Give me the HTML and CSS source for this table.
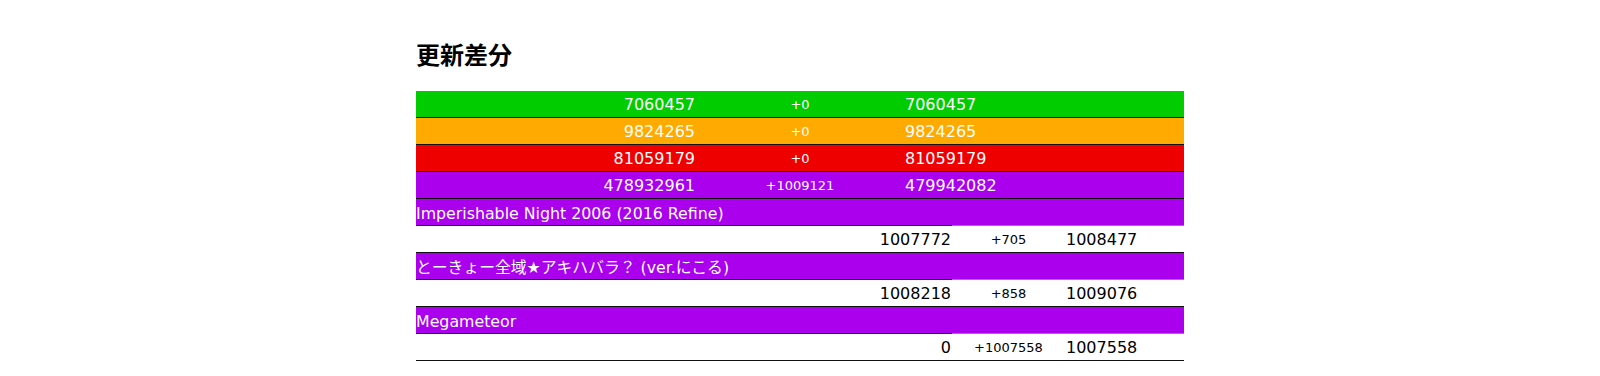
FILE: index.html
```html
<!DOCTYPE html>
<html lang="ja">
<head>
<meta charset="utf-8">
<title>更新差分</title>
<link rel="stylesheet" href="styles.css">
</head>
<body>
<main class="page">
  <h2 class="heading">更新差分</h2>
  <div class="diff">
    <div class="row summary basic"><span class="before">7060457</span><span class="delta">+0</span><span class="after">7060457</span></div>
    <div class="row summary advanced"><span class="before">9824265</span><span class="delta">+0</span><span class="after">9824265</span></div>
    <div class="row summary expert"><span class="before">81059179</span><span class="delta">+0</span><span class="after">81059179</span></div>
    <div class="row summary master"><span class="before">478932961</span><span class="delta">+1009121</span><span class="after">479942082</span></div>

    <div class="row song master"><span class="name">Imperishable Night 2006 (2016 Refine)</span></div>
    <div class="row score"><span class="before">1007772</span><span class="delta">+705</span><span class="after">1008477</span></div>

    <div class="row song master"><span class="name">とーきょー全域★アキハバラ？ (ver.にこる)</span></div>
    <div class="row score"><span class="before">1008218</span><span class="delta">+858</span><span class="after">1009076</span></div>

    <div class="row song master"><span class="name">Megameteor</span></div>
    <div class="row score"><span class="before">0</span><span class="delta">+1007558</span><span class="after">1007558</span></div>
  </div>
</main>
</body>
</html>
```

FILE: styles.css
```css
html, body {
  margin: 0;
  padding: 0;
  background: #ffffff;
}

body {
  font-family: "DejaVu Sans", Verdana, "Noto Sans CJK JP", sans-serif;
  font-size: 16px;
  color: #000000;
}

.page {
  width: 768px;
  margin: 0 auto;
}

.heading {
  font-family: "Noto Sans CJK JP", sans-serif;
  font-size: 24px;
  font-weight: 700;
  line-height: 32px;
  margin: 38px 0 21px;
}

.diff {
  display: flex;
  flex-direction: column;
}

.row {
  display: grid;
  box-sizing: border-box;
  height: 27px;
  padding-top: 2px;
  align-items: center;
  border-bottom: 1px solid #111111;
  line-height: 24px;
  white-space: nowrap;
}

.summary {
  grid-template-columns: 279px 210px 279px;
  color: #ffffff;
}

.score {
  grid-template-columns: 535px 115px 118px;
  color: #000000;
  background: #ffffff;
}

.before { text-align: right; }
.after { text-align: left; }
.delta {
  text-align: center;
  font-size: 13px;
}

.song {
  grid-template-columns: 1fr;
  color: #ffffff;
  border-bottom: none;
  background-image: linear-gradient(to right, #111111 0, #111111 536px, #c455f2 536px);
  background-size: 100% 1px;
  background-position: bottom left;
  background-repeat: no-repeat;
}

.name {
  font-size: 15.8px;
}

.basic { background-color: #00cc00; }
.advanced { background-color: #ffaa00; }
.expert { background-color: #ee0000; }
.master { background-color: #aa00ee; }
```
